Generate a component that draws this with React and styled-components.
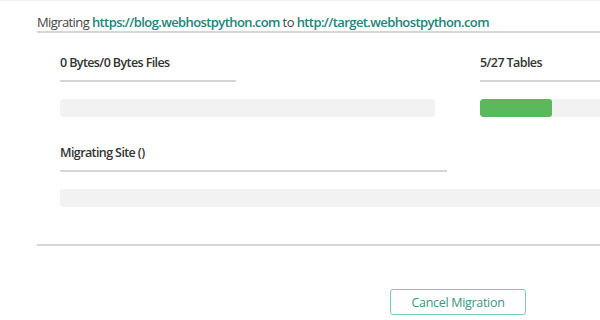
import React from 'react';
import styled, { createGlobalStyle } from 'styled-components';

const GlobalStyle = createGlobalStyle`
    html, body {
        margin: 0;
        padding: 0;
        background: #fff;
        font-family: "Open Sans", "Noto Sans", sans-serif;
        color: #3a3a3a;
    }
`;

const Page = styled.div`
    width: 600px;
    height: 320px;
    overflow: hidden;
    box-sizing: border-box;
    padding-left: 37px;
    border-top: 1px solid #f1f1f1;
`;

const Heading = styled.div`
    width: 600px;
    height: 32px;
    box-sizing: border-box;
    padding-top: 12px;
    font-size: 13px;
    line-height: 18px;
    letter-spacing: -0.6px;
    color: #444;
    border-bottom: 2px solid #d6d6d6;
    white-space: nowrap;
`;

const SiteLink = styled.a`
    color: #21857a;
    font-weight: 600;
    text-decoration: none;
`;

const Body = styled.div`
    padding-left: 23px;
    width: 700px;
`;

const Row = styled.div`
    display: flex;
    gap: 45px;
    margin-top: ${p => p.$top}px;
`;

const Column = styled.div`
    width: ${p => p.$width}px;
    flex-shrink: 0;
`;

const Label = styled.div`
    width: ${p => p.$width}px;
    height: 37px;
    box-sizing: border-box;
    padding-top: 9px;
    font-size: 12.5px;
    line-height: 18px;
    letter-spacing: -0.6px;
    font-weight: 600;
    color: #333;
    border-bottom: 2px solid #d6d6d6;
`;

const Track = styled.div`
    margin-top: 17px;
    height: 18px;
    background: #f2f2f2;
    border-radius: 3px;
    overflow: hidden;
`;

const Fill = styled.div`
    height: 100%;
    background: #5cb85c;
    border-radius: 3px;
`;

const Divider = styled.div`
    margin-top: 37px;
    width: 600px;
    height: 2px;
    background: #d6d6d6;
`;

const Footer = styled.div`
    display: flex;
    padding-left: 353px;
    padding-top: 43px;
`;

const CancelButton = styled.button`
    width: 136px;
    height: 26px;
    border: 1px solid #7ccabd;
    border-radius: 3px;
    background: #fff;
    color: #3c9485;
    font-family: "Open Sans", "Noto Sans", sans-serif;
    font-size: 12.5px;
    letter-spacing: -0.3px;
    padding: 0;
    cursor: pointer;
`;

export default function App() {
    const tables = { done: 5, total: 27 };
    const tablePct = 72 / 200 * 100;

    return (
        <>
            <GlobalStyle />
            <Page>
                <Heading>
                    Migrating <SiteLink href="#">https://blog.webhostpython.com</SiteLink> to{' '}
                    <SiteLink href="#">http://target.webhostpython.com</SiteLink>
                </Heading>
                <Body>
                    <Row $top={12}>
                        <Column $width={375}>
                            <Label $width={176}>0 Bytes/0 Bytes Files</Label>
                            <Track />
                        </Column>
                        <Column $width={200}>
                            <Label $width={200}>{tables.done}/{tables.total} Tables</Label>
                            <Track>
                                <Fill style={{ width: `${tablePct}%` }} />
                            </Track>
                        </Column>
                    </Row>
                    <Row $top={18}>
                        <Column $width={600}>
                            <Label $width={387}>Migrating Site ()</Label>
                            <Track />
                        </Column>
                    </Row>
                </Body>
                <Divider />
                <Footer>
                    <CancelButton>Cancel Migration</CancelButton>
                </Footer>
            </Page>
        </>
    );
}
